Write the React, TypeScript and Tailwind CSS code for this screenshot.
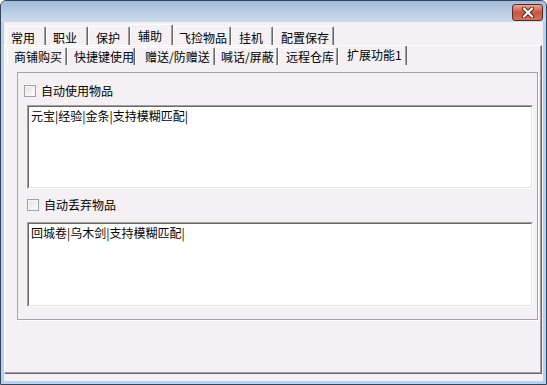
import React from 'react';

const font = { fontFamily: '"Noto Sans CJK SC", "Noto Sans", sans-serif' };

const topTabs = [
  { label: '常用', w: 'w-[40px]', pl: 'pl-[4px]' },
  { label: '职业', w: 'w-[42px]', pl: 'pl-[6px]' },
  { label: '保护', w: 'w-[42px]', pl: 'pl-[7px]' },
  { label: '辅助', w: 'w-[43px]', pl: 'pl-[7px]', active: true },
  { label: '飞捡物品', w: 'w-[58px]', pl: 'pl-[5px]' },
  { label: '挂机', w: 'w-[42px]', pl: 'pl-[7px]' },
  { label: '配置保存', w: 'w-[61px]', pl: 'pl-[7px]' },
];

const subTabs = [
  { label: '商铺购买', w: 'w-[60px]', pl: 'pl-[6px]' },
  { label: '快捷键使用', w: 'w-[68px]', pl: 'pl-[6px]' },
  { label: '赠送/防赠送', w: 'w-[80px]', pl: 'pl-[9px]' },
  { label: '喊话/屏蔽', w: 'w-[63px]', pl: 'pl-[5px]' },
  { label: '远程仓库', w: 'w-[60px]', pl: 'pl-[7px]' },
  { label: '扩展功能1', w: 'w-[69px]', pl: 'pl-[8px]', active: true },
];

type TabProps = { label: string; w: string; pl: string; active?: boolean };

const TopTab = ({ label, w, pl, active }: TabProps) => (
  <div
    className={`${w} ${pl} ${
      active ? 'h-[21px] pt-[1px]' : 'h-[19px] pt-[3px]'
    } flex items-center border-t border-l border-r border-t-white border-l-white border-r-[#696969] rounded-t-[2px] shadow-[inset_-1px_0_0_#a0a0a0] text-[12px] leading-[14px] whitespace-nowrap`}
  >
    {label}
  </div>
);

const SubTab = ({ label, w, pl, active }: TabProps) => (
  <div
    className={`${w} ${pl} ${
      active ? 'h-[20px] pb-[1px]' : 'h-[18px] pt-[1px]'
    } flex items-center border-t border-l border-r border-t-white border-l-white border-r-[#696969] rounded-t-[2px] shadow-[inset_-1px_0_0_#a0a0a0] text-[12px] leading-[14px] whitespace-nowrap`}
  >
    {label}
  </div>
);

const Check = ({ label, ml }: { label: string; ml: string }) => (
  <div className={`${ml} flex items-center gap-[5px] h-[12px]`}>
    <div className="w-[12px] h-[12px] border border-[#a2a2a2] bg-gradient-to-br from-[#e2e2e2] to-white shadow-[inset_0_0_0_1px_#f6f6f6]" />
    <span className="text-[12px] leading-[14px]">{label}</span>
  </div>
);

const Memo = ({ text, h }: { text: string; h: string }) => (
  <div className={`ml-[9px] w-[506px] ${h} border border-t-[#a0a0a0] border-l-[#a0a0a0] border-r-white border-b-white bg-white`}>
    <div className="h-full border border-t-[#696969] border-l-[#696969] border-r-[#e3e3e3] border-b-[#e3e3e3] pl-[2px] pt-[2px] text-[12px] leading-[14px]">
      {text}
    </div>
  </div>
);

export default function App() {
  return (
    <div
      style={font}
      className="w-[547px] h-[385px] flex flex-col bg-[#b5d3ee] border border-[#34465b] rounded-t-[6px] overflow-hidden text-black"
    >
      {/* title bar */}
      <div className="h-[21px] shrink-0 flex justify-end items-start pt-[3px] pr-[3px] bg-gradient-to-b from-[#a3bbd8] to-[#cddcec]">
        <div className="w-[31px] h-[17px] rounded-[3px] border border-[#5b2a22] bg-gradient-to-b from-[#e7a595] via-[#c8553f] to-[#d4725c] flex items-center justify-center">
          <svg width="14" height="11" viewBox="0 0 14 11">
            <path d="M3 1.5 L11 9.5 M11 1.5 L3 9.5" stroke="#5a2019" strokeWidth="4" strokeLinecap="round" />
            <path d="M3 1.5 L11 9.5 M11 1.5 L3 9.5" stroke="#ffffff" strokeWidth="2.2" strokeLinecap="round" />
          </svg>
        </div>
      </div>

      {/* client area */}
      <div className="flex-1 mx-[3px] mb-[3px] bg-[#f4f0f4] flex flex-col pt-[2px]">
        <div className="h-[21px] flex items-end pl-[2px]">
          {topTabs.map((t) => (
            <TopTab key={t.label} {...t} />
          ))}
        </div>

        <div className="w-[538px] h-[329px] border border-t-white border-l-white border-r-[#696969] border-b-[#696969] shadow-[inset_-1px_-1px_0_#a0a0a0] flex flex-col">
          <div className="h-[19px] flex items-end pl-[2px]">
            {subTabs.map((t) => (
              <SubTab key={t.label} {...t} />
            ))}
          </div>

          <div className="mt-[7px] ml-[12px] w-[521px] h-[248px] border border-[#a7a3a7] shadow-[1px_1px_0_#ffffff] flex flex-col">
            <div className="mt-[12px]">
              <Check label="自动使用物品" ml="ml-[6px]" />
            </div>
            <div className="mt-[8px]">
              <Memo text="元宝|经验|金条|支持模糊匹配|" h="h-[84px]" />
            </div>
            <div className="mt-[10px]">
              <Check label="自动丢弃物品" ml="ml-[9px]" />
            </div>
            <div className="mt-[11px]">
              <Memo text="回城卷|乌木剑|支持模糊匹配|" h="h-[85px]" />
            </div>
          </div>
        </div>
      </div>
    </div>
  );
}
